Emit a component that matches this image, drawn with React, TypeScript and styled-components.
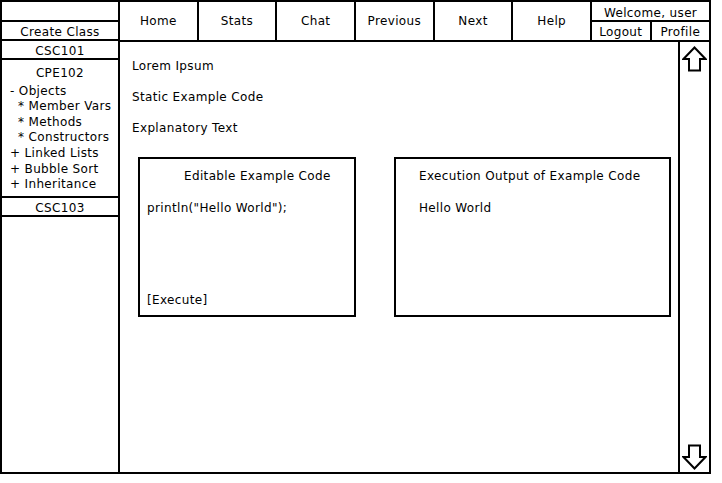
import React from 'react'
import styled, { createGlobalStyle } from 'styled-components'

const GlobalStyle = createGlobalStyle`
  html, body {
    margin: 0;
    padding: 0;
    background: #fff;
  }
  body {
    font-family: 'DejaVu Sans', 'Liberation Sans', sans-serif;
    font-size: 12px;
    letter-spacing: 0.35px;
    color: #000;
  }
  * {
    box-sizing: border-box;
  }
`

const Frame = styled.div`
  width: 711px;
  height: 474px;
  border: 2px solid #000;
  display: flex;
`

const Sidebar = styled.div`
  width: 118px;
  border-right: 2px solid #000;
  display: flex;
  flex-direction: column;
`

const SideCell = styled.div<{ $h: number }>`
  height: ${(p) => p.$h}px;
  border-bottom: 2px solid #000;
  display: flex;
  align-items: center;
  justify-content: center;
  padding-top: 2px;
  line-height: 1;
`

const CourseOpen = styled.div`
  height: 138px;
  border-bottom: 2px solid #000;
  padding: 6px 0 0 8px;
  line-height: 15.6px;
`

const CourseTitle = styled.div`
  text-align: center;
  padding-right: 8px;
  margin-bottom: 2px;
`

const Topic = styled.div<{ $indent?: boolean }>`
  padding-left: ${(p) => (p.$indent ? 8 : 0)}px;
  white-space: nowrap;
`

const Main = styled.div`
  flex: 1;
  display: flex;
  flex-direction: column;
`

const NavBar = styled.div`
  height: 40px;
  border-bottom: 2px solid #000;
  display: flex;
`

const NavButton = styled.div`
  flex: 1;
  border-right: 2px solid #000;
  display: flex;
  align-items: center;
  justify-content: center;
`

const UserBox = styled.div`
  width: 117px;
  display: flex;
  flex-direction: column;
`

const Welcome = styled.div`
  height: 20px;
  border-bottom: 2px solid #000;
  display: flex;
  align-items: center;
  justify-content: center;
  padding-top: 4px;
`

const UserActions = styled.div`
  flex: 1;
  display: flex;
`

const UserButton = styled.div<{ $last?: boolean }>`
  flex: 1;
  border-right: ${(p) => (p.$last ? 'none' : '2px solid #000')};
  display: flex;
  align-items: center;
  justify-content: center;
  padding-top: 2px;
`

const Body = styled.div`
  flex: 1;
  display: flex;
`

const Content = styled.div`
  flex: 1;
  padding: 9px 0 0 12px;
`

const TextLine = styled.div`
  line-height: 31px;
`

const Panels = styled.div`
  display: flex;
  gap: 38px;
  margin: 13px 0 0 6px;
`

const Panel = styled.div<{ $w: number }>`
  width: ${(p) => p.$w}px;
  height: 160px;
  border: 2px solid #000;
  display: flex;
  flex-direction: column;
  padding: 9px 0 7px;
`

const PanelTitle = styled.div<{ $indent: number }>`
  padding-left: ${(p) => p.$indent}px;
  line-height: 16px;
`

const PanelText = styled.div<{ $indent: number }>`
  padding-left: ${(p) => p.$indent}px;
  margin-top: 16px;
  line-height: 16px;
`

const PanelFooter = styled.div<{ $indent: number }>`
  padding-left: ${(p) => p.$indent}px;
  margin-top: auto;
  line-height: 16px;
`

const Scrollbar = styled.div`
  width: 31px;
  border-left: 2px solid #000;
  display: flex;
  flex-direction: column;
  justify-content: space-between;
  align-items: center;
  padding: 4px 0 2px;
`

const Arrow = ({ down }: { down?: boolean }) => (
  <svg
    width='25'
    height='26'
    viewBox='0 0 25 26'
    style={down ? { transform: 'rotate(180deg)' } : undefined}
  >
    <polygon
      points='12.5,1.5 1.5,13 7,13 7,24.5 18,24.5 18,13 23.5,13'
      fill='#fff'
      stroke='#000'
      strokeWidth='2'
      strokeLinejoin='miter'
    />
  </svg>
)

const App = () => {
  return (
    <>
      <GlobalStyle />
      <Frame>
        <Sidebar>
          <SideCell $h={20} />
          <SideCell $h={19}>Create Class</SideCell>
          <SideCell $h={19}>CSC101</SideCell>
          <CourseOpen>
            <CourseTitle>CPE102</CourseTitle>
            <Topic>- Objects</Topic>
            <Topic $indent>* Member Vars</Topic>
            <Topic $indent>* Methods</Topic>
            <Topic $indent>* Constructors</Topic>
            <Topic>+ Linked Lists</Topic>
            <Topic>+ Bubble Sort</Topic>
            <Topic>+ Inheritance</Topic>
          </CourseOpen>
          <SideCell $h={19}>CSC103</SideCell>
        </Sidebar>
        <Main>
          <NavBar>
            <NavButton>Home</NavButton>
            <NavButton>Stats</NavButton>
            <NavButton>Chat</NavButton>
            <NavButton>Previous</NavButton>
            <NavButton>Next</NavButton>
            <NavButton>Help</NavButton>
            <UserBox>
              <Welcome>Welcome, user</Welcome>
              <UserActions>
                <UserButton>Logout</UserButton>
                <UserButton $last>Profile</UserButton>
              </UserActions>
            </UserBox>
          </NavBar>
          <Body>
            <Content>
              <TextLine>Lorem Ipsum</TextLine>
              <TextLine>Static Example Code</TextLine>
              <TextLine>Explanatory Text</TextLine>
              <Panels>
                <Panel $w={218}>
                  <PanelTitle $indent={44}>Editable Example Code</PanelTitle>
                  <PanelText $indent={7}>println("Hello World");</PanelText>
                  <PanelFooter $indent={7}>[Execute]</PanelFooter>
                </Panel>
                <Panel $w={277}>
                  <PanelTitle $indent={23}>Execution Output of Example Code</PanelTitle>
                  <PanelText $indent={23}>Hello World</PanelText>
                </Panel>
              </Panels>
            </Content>
            <Scrollbar>
              <Arrow />
              <Arrow down />
            </Scrollbar>
          </Body>
        </Main>
      </Frame>
    </>
  )
}

export default App
